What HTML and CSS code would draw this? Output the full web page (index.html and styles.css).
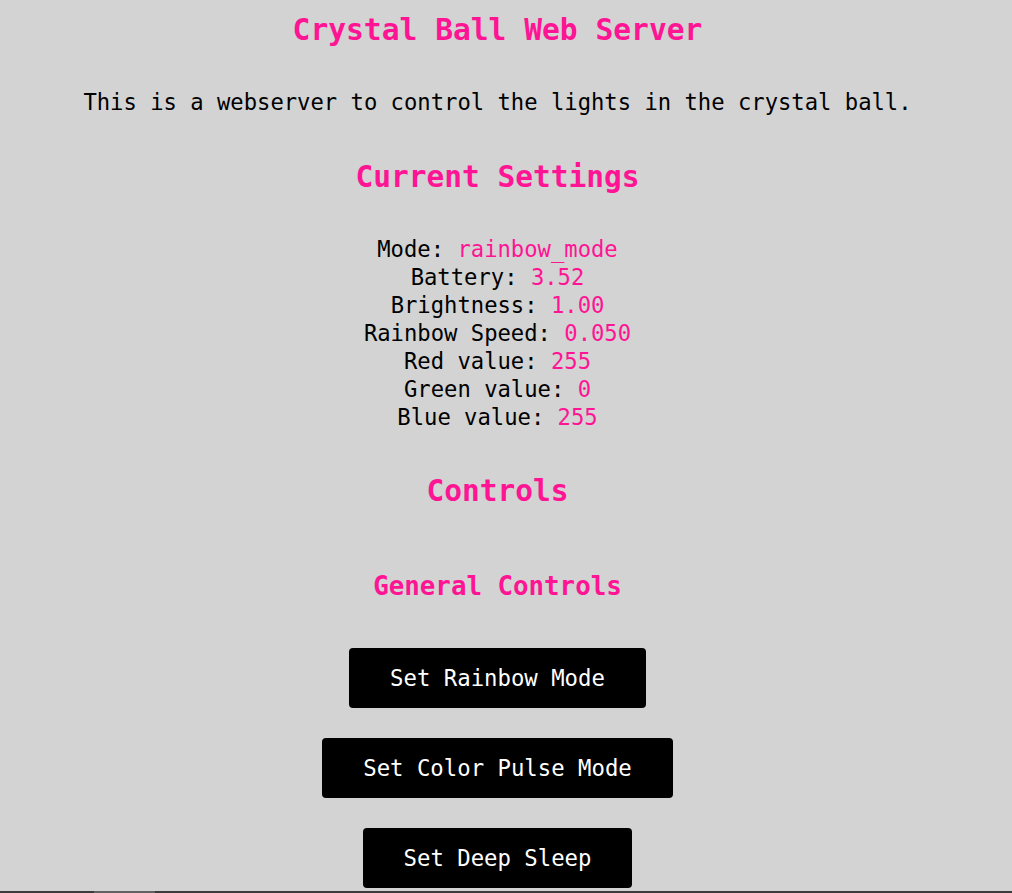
FILE: index.html
```html
<!DOCTYPE html>
<html lang="en">
<head>
<meta charset="utf-8">
<title>Crystal Ball Web Server</title>
<link rel="stylesheet" href="styles.css">
</head>
<body>
<main class="page">
  <h1 class="title">Crystal Ball Web Server</h1>
  <p class="intro">This is a webserver to control the lights in the crystal ball.</p>

  <h2 class="section">Current Settings</h2>
  <div class="settings">
    <div class="row">Mode: <span class="val">rainbow_mode</span></div>
    <div class="row">Battery: <span class="val">3.52</span></div>
    <div class="row">Brightness: <span class="val">1.00</span></div>
    <div class="row">Rainbow Speed: <span class="val">0.050</span></div>
    <div class="row">Red value: <span class="val">255</span></div>
    <div class="row">Green value: <span class="val">0</span></div>
    <div class="row">Blue value: <span class="val">255</span></div>
  </div>

  <h2 class="section controls">Controls</h2>
  <h3 class="subsection">General Controls</h3>
  <div class="buttons">
    <button class="btn">Set Rainbow Mode</button>
    <button class="btn">Set Color Pulse Mode</button>
    <button class="btn">Set Deep Sleep</button>
  </div>
</main>
<div class="hscroll"><div class="thumb"></div></div>
</body>
</html>
```
FILE: styles.css
```css
html, body {
  margin: 0;
  padding: 0;
  background: #d3d3d3;
  overflow: hidden;
}

body {
  font-family: "DejaVu Sans Mono", "Liberation Mono", monospace;
  color: #000;
}

.page {
  padding-right: 17px;
  text-align: center;
}

.title {
  margin: 10px 0 0;
  font-size: 29.6px;
  line-height: 40px;
  font-weight: bold;
  color: #ff1493;
}

.intro {
  margin: 38px 0 0;
  font-size: 22.2px;
  line-height: 28px;
}

.section {
  margin: 41px 0 0;
  font-size: 29.5px;
  line-height: 40px;
  font-weight: bold;
  color: #ff1493;
}

.settings {
  margin-top: 38px;
  font-size: 22.2px;
  line-height: 28px;
}

.val {
  color: #ff1493;
}

.section.controls {
  margin-top: 40px;
}

.subsection {
  margin: 57px 0 0;
  font-size: 25.8px;
  line-height: 36px;
  font-weight: bold;
  color: #ff1493;
}

.buttons {
  margin-top: 44px;
  display: flex;
  flex-direction: column;
  align-items: center;
  gap: 30px;
}

.btn {
  height: 60px;
  padding: 0 41px;
  border: none;
  border-radius: 4px;
  background: #000;
  color: #fff;
  font-family: "DejaVu Sans Mono", "Liberation Mono", monospace;
  font-size: 22.3px;
  cursor: pointer;
}

.hscroll {
  position: fixed;
  left: 0;
  right: 0;
  bottom: 0;
  height: 2px;
  background: #3c3c3c;
}

.hscroll .thumb {
  margin-left: 94px;
  width: 61px;
  height: 2px;
  background: #626262;
}
```
